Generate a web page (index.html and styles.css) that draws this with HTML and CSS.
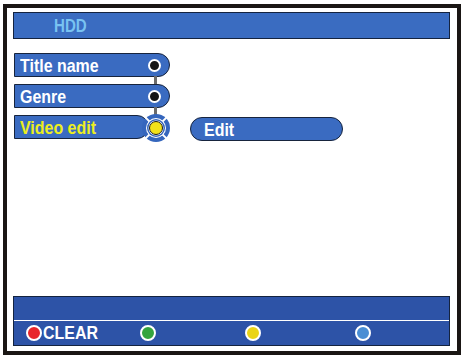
FILE: index.html
```html
<!DOCTYPE html>
<html lang="en">
<head>
    <meta charset="UTF-8">
    <title>HDD</title>
    <link rel="stylesheet" href="styles.css">
</head>
<body>
    <div class="screen">
        <div class="header"><span class="label">HDD</span></div>

        <div class="menu">
            <div class="row">
                <div class="pill"><span class="label">Title name</span><span class="dot"></span></div>
            </div>
            <div class="row">
                <div class="pill"><span class="label">Genre</span><span class="dot"></span></div>
            </div>
            <div class="row">
                <div class="pill selected"><span class="label">Video edit</span></div>
                <!-- selector knob over the end of the pill -->
                <svg class="knob" width="30" height="30" viewBox="0 0 30 30">
                    <circle cx="15" cy="15" r="14" fill="#3566bd"/>
                    <g stroke="#fff" stroke-width="1.8">
                        <line x1="4" y1="4" x2="26" y2="26"/>
                        <line x1="26" y1="4" x2="4" y2="26"/>
                    </g>
                    <circle cx="15" cy="15" r="10" fill="#fff"/>
                    <circle cx="15" cy="15" r="9" fill="#3566bd"/>
                    <circle cx="15" cy="15" r="7.5" fill="#fff"/>
                    <circle cx="15" cy="15" r="6.5" fill="#f2e21a" stroke="#1b1b1b" stroke-width="1"/>
                </svg>
                <div class="option"><span class="label">Edit</span></div>
            </div>
        </div>

        <div class="footer">
            <div class="footer-top"></div>
            <div class="footer-keys">
                <div class="key"><span class="ball red"></span><span class="label">CLEAR</span></div>
                <div class="key"><span class="ball green"></span></div>
                <div class="key"><span class="ball yellow"></span></div>
                <div class="key"><span class="ball blue"></span></div>
            </div>
        </div>
    </div>
</body>
</html>
```

FILE: styles.css
```css
body {
    margin: 0;
    background-color: #fff;
    font-family: "Liberation Sans", Arial, sans-serif;
    font-weight: bold;
}

/* narrow, tall lettering like the on-screen font */
.label {
    display: inline-block;
    transform: scaleX(0.84);
    transform-origin: left center;
    white-space: nowrap;
}

/* Outer black frame */
.screen {
    margin: 4px 0 0 3px;
    width: 437px;
    height: 334px;
    border: 4px solid #1a1614;
    padding: 4px 7px 5px 6px;
    display: flex;
    flex-direction: column;
}

.header {
    height: 25px;
    background-color: #3a6cc1;
    border: 1px solid #14233f;
    color: #79c3f1;
    font-size: 18px;
    line-height: 26px;
    padding-left: 40px;
}

/* Menu list */
.menu {
    margin: 14px 0 0 1px;
    display: flex;
    flex-direction: column;
    gap: 7px;
}

.row {
    position: relative;
    display: flex;
    align-items: center;
    height: 24px;
}

.pill {
    position: relative;
    box-sizing: border-box;
    width: 156px;
    height: 24px;
    background-color: #3a6bc1;
    border: 1px solid #17243d;
    border-radius: 0 12px 12px 0;
    color: #fff;
    font-size: 19px;
    line-height: 23px;
    padding-left: 5px;
}

.pill.selected {
    width: 135px;
    color: #ecee1e;
}

/* Connector line between rows */
.row + .row::before {
    content: "";
    position: absolute;
    left: 140px;
    top: -8px;
    width: 3px;
    height: 9px;
    background-color: #6b6b6b;
}

.dot {
    position: absolute;
    right: 8px;
    top: 5px;
    width: 9px;
    height: 9px;
    border-radius: 50%;
    background-color: #161616;
    border: 2px solid #fff;
}

.knob {
    position: absolute;
    left: 127px;
    top: -2px;
}

.option {
    box-sizing: border-box;
    width: 153px;
    height: 24px;
    margin: 4px 0 0 41px;
    background-color: #3a6bc1;
    border: 1px solid #17243d;
    border-radius: 12px;
    color: #fff;
    font-size: 19px;
    line-height: 23px;
    padding-left: 13px;
}

/* Colour key bar */
.footer {
    margin-top: auto;
    border: 1px solid #14233f;
    background-color: #2d53a7;
}

.footer-top {
    height: 23px;
    border-bottom: 1px solid #fff;
}

.footer-keys {
    height: 24px;
    display: grid;
    grid-template-columns: 114px 105px 110px auto;
    align-items: center;
    padding-left: 12px;
}

.key {
    display: flex;
    align-items: center;
    color: #fff;
    font-size: 19px;
}

.ball {
    box-sizing: border-box;
    width: 16px;
    height: 16px;
    border-radius: 50%;
    border: 2px solid #fff;
    margin-right: 1px;
}

.red { background-color: #e8262b; }
.green { background-color: #34a43e; }
.yellow { background-color: #ead418; }
.blue { background-color: #4a8ed4; }
```
